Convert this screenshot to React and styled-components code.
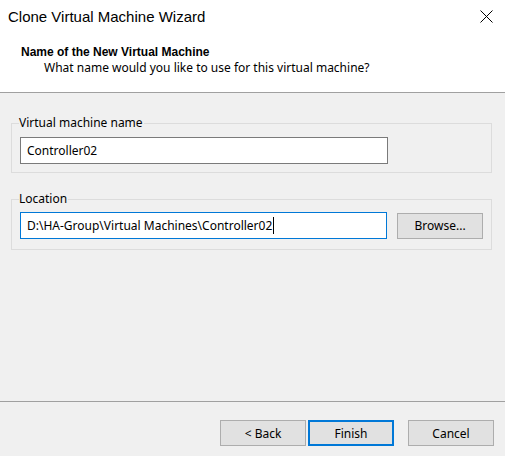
import React from 'react';
import styled, { createGlobalStyle } from 'styled-components';

const GlobalStyle = createGlobalStyle`
  html, body {
    margin: 0;
    padding: 0;
    background: #f0f0f0;
  }
  * {
    box-sizing: border-box;
  }
`;

const Window = styled.div`
  width: 505px;
  height: 456px;
  display: flex;
  flex-direction: column;
  background: #f0f0f0;
  font-family: "Noto Sans", "Liberation Sans", Arial, sans-serif;
  font-size: 12px;
  color: #000;
  overflow: hidden;
`;

const TitleBar = styled.div`
  height: 32px;
  display: flex;
  align-items: center;
  justify-content: space-between;
  padding: 0 12px 0 8px;
  background: #fff;
  font-family: "Liberation Sans", Arial, sans-serif;
  font-size: 15px;
`;

const CloseButton = styled.div`
  width: 14px;
  height: 14px;
  display: flex;
  align-items: center;
  justify-content: center;
`;

const Header = styled.div`
  height: 61px;
  background: #fff;
  border-bottom: 1px solid #a0a0a0;
  padding: 12px 0 0 21px;
`;

const HeaderTitle = styled.div`
  font-family: "Liberation Sans", Arial, sans-serif;
  font-weight: bold;
  line-height: 16px;
`;

const HeaderSub = styled.div`
  margin-left: 23px;
  line-height: 16px;
`;

const Body = styled.div`
  flex: 1;
  display: flex;
  flex-direction: column;
  gap: 18px;
  padding: 22px 13px 0 11px;
`;

const Group = styled.fieldset`
  margin: 0;
  padding: ${(p) => p.$pt}px 8px ${(p) => p.$pb}px 8px;
  border: 1px solid #dcdcdc;
  min-width: 0;
`;

const Legend = styled.legend`
  padding: 0 1px 0 0;
  margin-left: -1px;
  line-height: 16px;
`;

const Row = styled.div`
  display: flex;
  align-items: center;
  gap: 10px;
`;

const TextBox = styled.div`
  width: 368px;
  height: 27px;
  display: flex;
  align-items: center;
  padding: 0 0 1px 6px;
  background: #fff;
  border: 1px solid ${(p) => (p.$focused ? '#0078d7' : '#7a7a7a')};
  white-space: nowrap;
`;

const Caret = styled.span`
  display: inline-block;
  width: 1px;
  height: 17px;
  margin-left: 1px;
  background: #000;
`;

const Button = styled.button`
  width: 86px;
  height: 26px;
  margin: 0;
  padding: 0;
  font-family: inherit;
  font-size: 12px;
  color: #000;
  background: #e1e1e1;
  border: ${(p) => (p.$default ? '2px solid #0078d7' : '1px solid #adadad')};
`;

const Footer = styled.div`
  height: 55px;
  border-top: 1px solid #a0a0a0;
  display: flex;
  justify-content: flex-end;
  align-items: flex-start;
  padding: 18px 11px 0 0;
`;

const ButtonPair = styled.div`
  display: flex;
  gap: 2px;
  margin-right: 14px;
`;

export default function App() {
  return (
    <>
      <GlobalStyle />
      <Window>
        <TitleBar>
          <span>Clone Virtual Machine Wizard</span>
          <CloseButton>
            <svg width="13" height="13" viewBox="0 0 13 13">
              <path d="M0.5 0.5 L12.5 12.5 M12.5 0.5 L0.5 12.5" stroke="#000" strokeWidth="1" />
            </svg>
          </CloseButton>
        </TitleBar>
        <Header>
          <HeaderTitle>Name of the New Virtual Machine</HeaderTitle>
          <HeaderSub>What name would you like to use for this virtual machine?</HeaderSub>
        </Header>
        <Body>
          <Group $pt={6} $pb={8}>
            <Legend>Virtual machine name</Legend>
            <TextBox>Controller02</TextBox>
          </Group>
          <Group $pt={5} $pb={10}>
            <Legend>Location</Legend>
            <Row>
              <TextBox $focused>
                D:\HA-Group\Virtual Machines\Controller02
                <Caret />
              </TextBox>
              <Button>Browse...</Button>
            </Row>
          </Group>
        </Body>
        <Footer>
          <ButtonPair>
            <Button>&lt; Back</Button>
            <Button $default>Finish</Button>
          </ButtonPair>
          <Button>Cancel</Button>
        </Footer>
      </Window>
    </>
  );
}
